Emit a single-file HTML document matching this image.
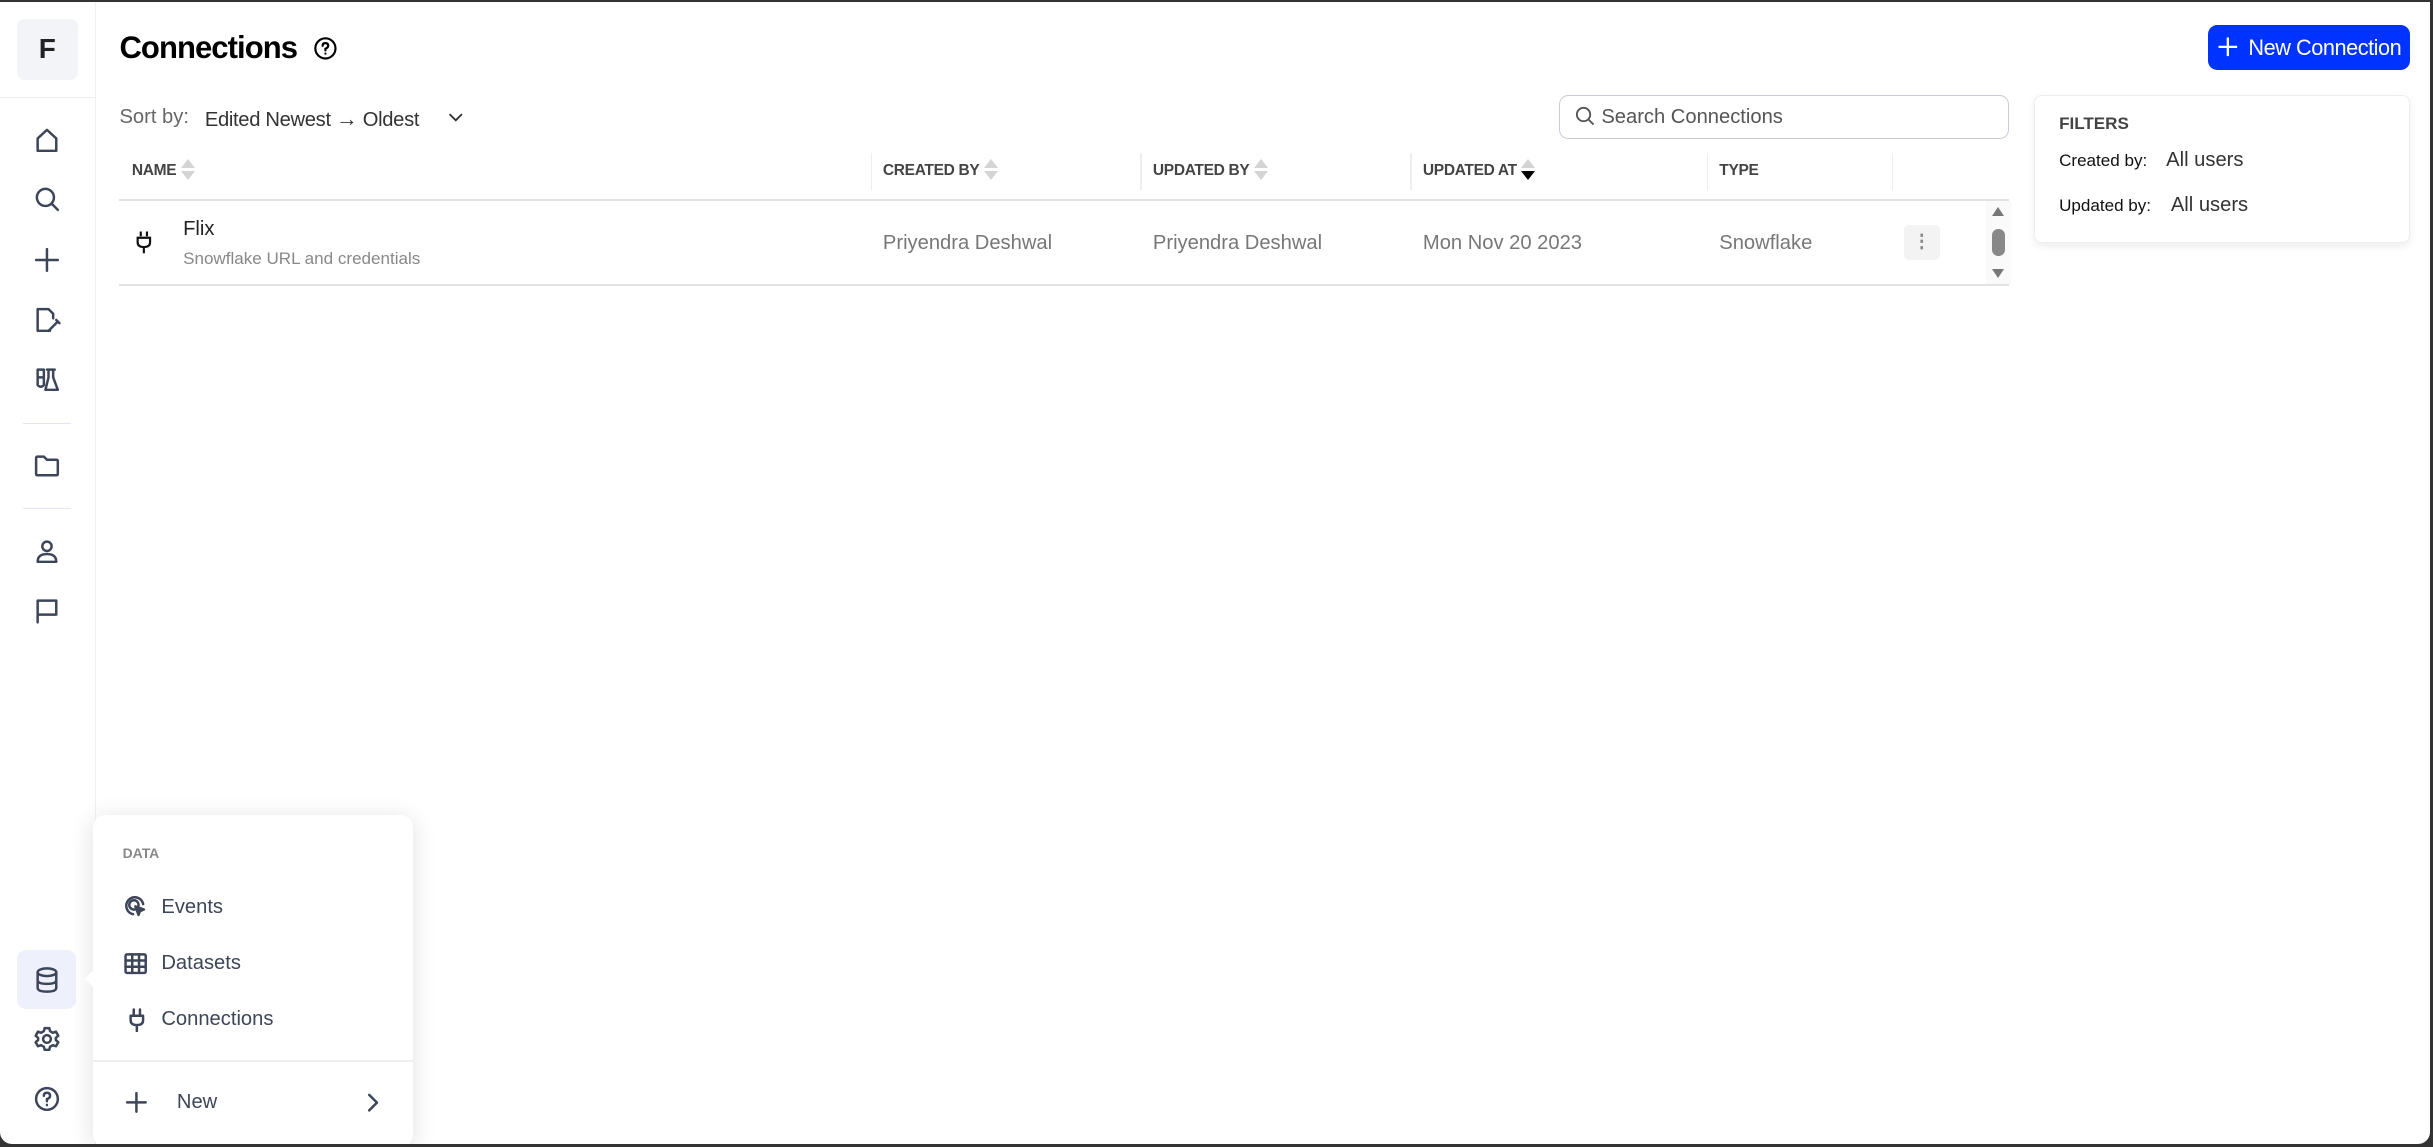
<!DOCTYPE html>
<html><head><meta charset="utf-8"><style>
*{box-sizing:border-box;margin:0;padding:0}
html,body{width:2433px;height:1147px;overflow:hidden;background:#333}
#win{position:absolute;left:0;top:2px;width:2430px;height:1142px;background:#fff;border-radius:0 0 12px 12px;overflow:hidden}
#z{position:absolute;left:0;top:-1px;width:1568px;height:739px;zoom:1.5517;font-family:"Liberation Sans",sans-serif;color:#111}
.a{position:absolute;white-space:nowrap}
.ic{position:absolute;width:18px;height:18px;fill:none;stroke:#3d4559;stroke-width:1.6;stroke-linecap:round;stroke-linejoin:round}
.th{position:absolute;top:103px;font-size:10px;font-weight:bold;color:#444;letter-spacing:-.2px}
.sort{display:inline-block;vertical-align:middle;margin-left:3px;width:10px;height:14px;position:relative;top:-1px}
.sort:before{content:"";position:absolute;left:0;top:0;border:5px solid transparent;border-top:none;border-bottom:6px solid #d4d4d4}
.sort:after{content:"";position:absolute;left:0;top:8px;border:5px solid transparent;border-bottom:none;border-top:6px solid #d4d4d4}
.sort.d:after{border-top-color:#000}
.vd{position:absolute;top:98px;width:1px;height:24px;background:#eee}
.cell{position:absolute;top:148px;font-size:13px;color:#777}
.mi{position:absolute;left:104px;font-size:13px;color:#3d4559}
</style></head><body><div id="win"><div id="z">
<!-- sidebar -->
<div class="a" style="left:61px;top:0;width:1px;height:739px;background:#eef0f6"></div>
<div class="a" style="left:0;top:62px;width:61px;height:1px;background:#eceef3"></div>
<div class="a" style="left:11px;top:12px;width:39px;height:39px;background:#f3f4f8;border-radius:5px;font-size:18px;font-weight:bold;color:#222;text-align:center;line-height:39px">F</div>
<svg class="ic" style="left:21px;top:81px" viewBox="0 0 18 18"><path d="M3 8L9 2.5 15 8V16H3Z"/></svg>
<svg class="ic" style="left:21px;top:119px" viewBox="0 0 18 18"><circle cx="8" cy="8" r="5.5"/><path d="M12 12L16 16"/></svg>
<svg class="ic" style="left:21px;top:158px" viewBox="0 0 18 18"><path d="M9 2V16M2 9H16"/></svg>
<svg class="ic" style="left:21px;top:197px" viewBox="0 0 18 18"><path d="M11 16H3V2H10L13 5V8"/><path d="M10 16L16 10M15 9L17 11"/></svg>
<svg class="ic" style="left:21px;top:235px" viewBox="0 0 18 18"><path d="M3 3H7V13Q5 15 3 13ZM3 8H7M9 3H14M10 3V8L8 16H16L13 8V3"/></svg>
<div class="a" style="left:15px;top:272px;width:31px;height:1px;background:#e3e6f0"></div>
<svg class="ic" style="left:21px;top:291px" viewBox="0 0 18 18"><path d="M2 4Q2 3 3 3H7L9 5H15Q16 5 16 6V14Q16 15 15 15H3Q2 15 2 14Z"/></svg>
<div class="a" style="left:15px;top:327px;width:31px;height:1px;background:#e3e6f0"></div>
<svg class="ic" style="left:21px;top:346px" viewBox="0 0 18 18"><circle cx="9" cy="6" r="3"/><path d="M3 16Q3 11 9 11 15 11 15 16Z"/></svg>
<svg class="ic" style="left:21px;top:384px" viewBox="0 0 18 18"><path d="M3 17V3H15V12H3"/></svg>
<div class="a" style="left:11px;top:612px;width:38px;height:38px;background:#eef0fb;border-radius:6px"></div>
<svg class="ic" style="left:21px;top:622px" viewBox="0 0 18 18"><ellipse cx="9" cy="4" rx="6" ry="2.5"/><path d="M3 4V14Q3 16.5 9 16.5 15 16.5 15 14V4M3 9Q3 11.5 9 11.5 15 11.5 15 9"/></svg>
<svg class="ic" style="left:21px;top:660px" viewBox="0 0 18 18"><circle cx="9" cy="9" r="2.5"/><path d="M7.5 2H10.5L11 4 12.8 5 14.8 4.3 16.3 6.9 14.7 8.3V9.7L16.3 11.1 14.8 13.7 12.8 13 11 14 10.5 16H7.5L7 14 5.2 13 3.2 13.7 1.7 11.1 3.3 9.7V8.3L1.7 6.9 3.2 4.3 5.2 5 7 4Z"/></svg>
<svg class="ic" style="left:21px;top:699px" viewBox="0 0 18 18"><circle cx="9" cy="9" r="7"/><path d="M7 7Q7 5 9 5 11 5 11 7 11 8.5 9 9V10.5M9 12.8V13"/></svg>
<!-- header -->
<div class="a" style="left:77px;top:19px;font-size:20px;font-weight:bold;letter-spacing:-.6px;color:#000">Connections</div>
<svg class="a" style="left:202px;top:23px;width:16px;height:16px" viewBox="0 0 16 16" fill="none" stroke="#000" stroke-width="1.4" stroke-linecap="round"><circle cx="8" cy="8" r="6.5"/><path d="M6.2 6.3Q6.2 4.6 8 4.6 9.8 4.6 9.8 6.2 9.8 7.5 8 8.2V9.3M8 11.3V11.4"/></svg>
<div class="a" style="left:1423px;top:16px;width:130px;height:29px;background:#0033ff;border-radius:6px;color:#fff;font-size:14px;line-height:29px;padding-left:26px;letter-spacing:-.3px">New Connection</div>
<svg class="a" style="left:1429px;top:23px;width:14px;height:14px" viewBox="0 0 14 14" stroke="#fff" stroke-width="1.5"><path d="M7 1V13M1 7H13"/></svg>
<div class="a" style="left:77px;top:68px;font-size:13px;color:#666">Sort by:</div>
<div class="a" style="left:132px;top:68px;font-size:13px;color:#333;letter-spacing:-.2px">Edited Newest <span style="font-size:14px">→</span> Oldest</div>
<svg class="a" style="left:289px;top:71px;width:10px;height:8px" viewBox="0 0 10 8" fill="none" stroke="#333" stroke-width="1.2"><path d="M1 2L5 6 9 2"/></svg>
<div class="a" style="left:1005px;top:61px;width:290px;height:28px;border:1px solid #c8cad8;border-radius:6px"></div>
<svg class="a" style="left:1015px;top:68px;width:13px;height:13px" viewBox="0 0 13 13" fill="none" stroke="#555" stroke-width="1.2"><circle cx="5.5" cy="5.5" r="4.3"/><path d="M8.7 8.7L12 12"/></svg>
<div class="a" style="left:1032px;top:68px;font-size:13px;color:#555">Search Connections</div>
<div class="a" style="left:1311px;top:61px;width:242px;height:95px;border:1px solid #eceef2;border-radius:5px;box-shadow:0 2px 5px rgba(0,0,0,.07)"></div>
<div class="a" style="left:1327px;top:73px;font-size:11px;font-weight:bold;color:#444">FILTERS</div>
<div class="a" style="left:1327px;top:97px;font-size:11px;color:#111">Created by:</div>
<div class="a" style="left:1396px;top:96px;font-size:13px;color:#333">All users</div>
<div class="a" style="left:1327px;top:126px;font-size:11px;color:#111">Updated by:</div>
<div class="a" style="left:1399px;top:125px;font-size:13px;color:#333">All users</div>
<!-- table -->
<div class="th" style="left:85px">NAME<span class="sort"></span></div>
<div class="vd" style="left:561px"></div><div class="th" style="left:569px">CREATED BY<span class="sort"></span></div>
<div class="vd" style="left:735px"></div><div class="th" style="left:743px">UPDATED BY<span class="sort"></span></div>
<div class="vd" style="left:909px"></div><div class="th" style="left:917px">UPDATED AT<span class="sort d"></span></div>
<div class="vd" style="left:1100px"></div><div class="th" style="left:1108px;top:104px">TYPE</div>
<div class="vd" style="left:1219px"></div>
<div class="a" style="left:77px;top:128px;width:1218px;height:1px;background:#e2e2e2"></div>
<div class="a" style="left:77px;top:183px;width:1218px;height:1px;background:#e2e2e2"></div>
<svg class="a" style="left:86px;top:148px;width:14px;height:16px" viewBox="0 0 14 16" fill="none" stroke="#111" stroke-width="1.4"><path d="M5 1V4M9 1V4M3 5H11V8Q11 11 7 11 3 11 3 8ZM7 11V15"/></svg>
<div class="a" style="left:118px;top:140px;font-size:13px;color:#222">Flix</div>
<div class="a" style="left:118px;top:160px;font-size:11px;color:#888">Snowflake URL and credentials</div>
<div class="cell" style="left:569px;top:149px">Priyendra Deshwal</div>
<div class="cell" style="left:743px;top:149px">Priyendra Deshwal</div>
<div class="cell" style="left:917px;top:149px">Mon Nov 20 2023</div>
<div class="cell" style="left:1108px;top:149px">Snowflake</div>
<div class="a" style="left:1227px;top:145px;width:23px;height:22px;background:#f3f3f4;border-radius:3px;color:#888;font-size:12px;text-align:center;line-height:21px;font-weight:bold">⋮</div>
<div class="a" style="left:1280px;top:129px;width:16px;height:54px;background:#fafafa"></div>
<div class="a" style="left:1284px;top:133px;border:4px solid transparent;border-top:none;border-bottom:6px solid #777"></div>
<div class="a" style="left:1284px;top:147px;width:8px;height:18px;background:#888;border-radius:4px"></div>
<div class="a" style="left:1284px;top:173px;border:4px solid transparent;border-bottom:none;border-top:6px solid #777"></div>
<!-- popup -->
<div class="a" style="left:60px;top:525px;width:206px;height:214px;background:#fff;border-radius:8px;box-shadow:0 2px 16px rgba(0,0,0,.12)"></div>
<div class="a" style="left:56px;top:627px;width:8px;height:8px;background:#fff;transform:rotate(45deg)"></div>
<div class="a" style="left:79px;top:544px;font-size:9px;font-weight:bold;color:#888">DATA</div>
<svg class="ic" style="left:79px;top:576px;width:16px;height:16px" viewBox="0 0 16 16"><path d="M13 6.5A5.5 5.5 0 1 0 6.5 13M10 7.5A3 3 0 1 0 7.5 10"/><path d="M8 8L13.5 10 11 11 10 13.5Z" fill="#3d4559"/></svg>
<div class="mi" style="top:577px">Events</div>
<svg class="ic" style="left:80px;top:613px;width:15px;height:15px" viewBox="0 0 15 15" stroke-width="1.3"><rect x="1" y="1.5" width="13" height="12" rx="1"/><path d="M1 5.5H14M1 9.5H14M5.3 1.5V13.5M9.7 1.5V13.5"/></svg>
<div class="mi" style="top:613px">Datasets</div>
<svg class="ic" style="left:81px;top:649px;width:14px;height:16px" viewBox="0 0 14 16" stroke-width="1.4"><path d="M5 1V4M9 1V4M3 5H11V8Q11 11 7 11 3 11 3 8ZM7 11V15"/></svg>
<div class="mi" style="top:649px">Connections</div>
<div class="a" style="left:60px;top:683px;width:206px;height:1px;background:#eceef2"></div>
<svg class="ic" style="left:80px;top:702px;width:16px;height:16px" viewBox="0 0 16 16" stroke-width="1.3"><path d="M8 2V14M2 8H14"/></svg>
<div class="mi" style="left:114px;top:703px">New</div>
<svg class="ic" style="left:234px;top:703px;width:12px;height:15px" viewBox="0 0 12 15" stroke-width="1.4"><path d="M4 2.5L9 7.5 4 12.5"/></svg>
</div></div></body></html>
